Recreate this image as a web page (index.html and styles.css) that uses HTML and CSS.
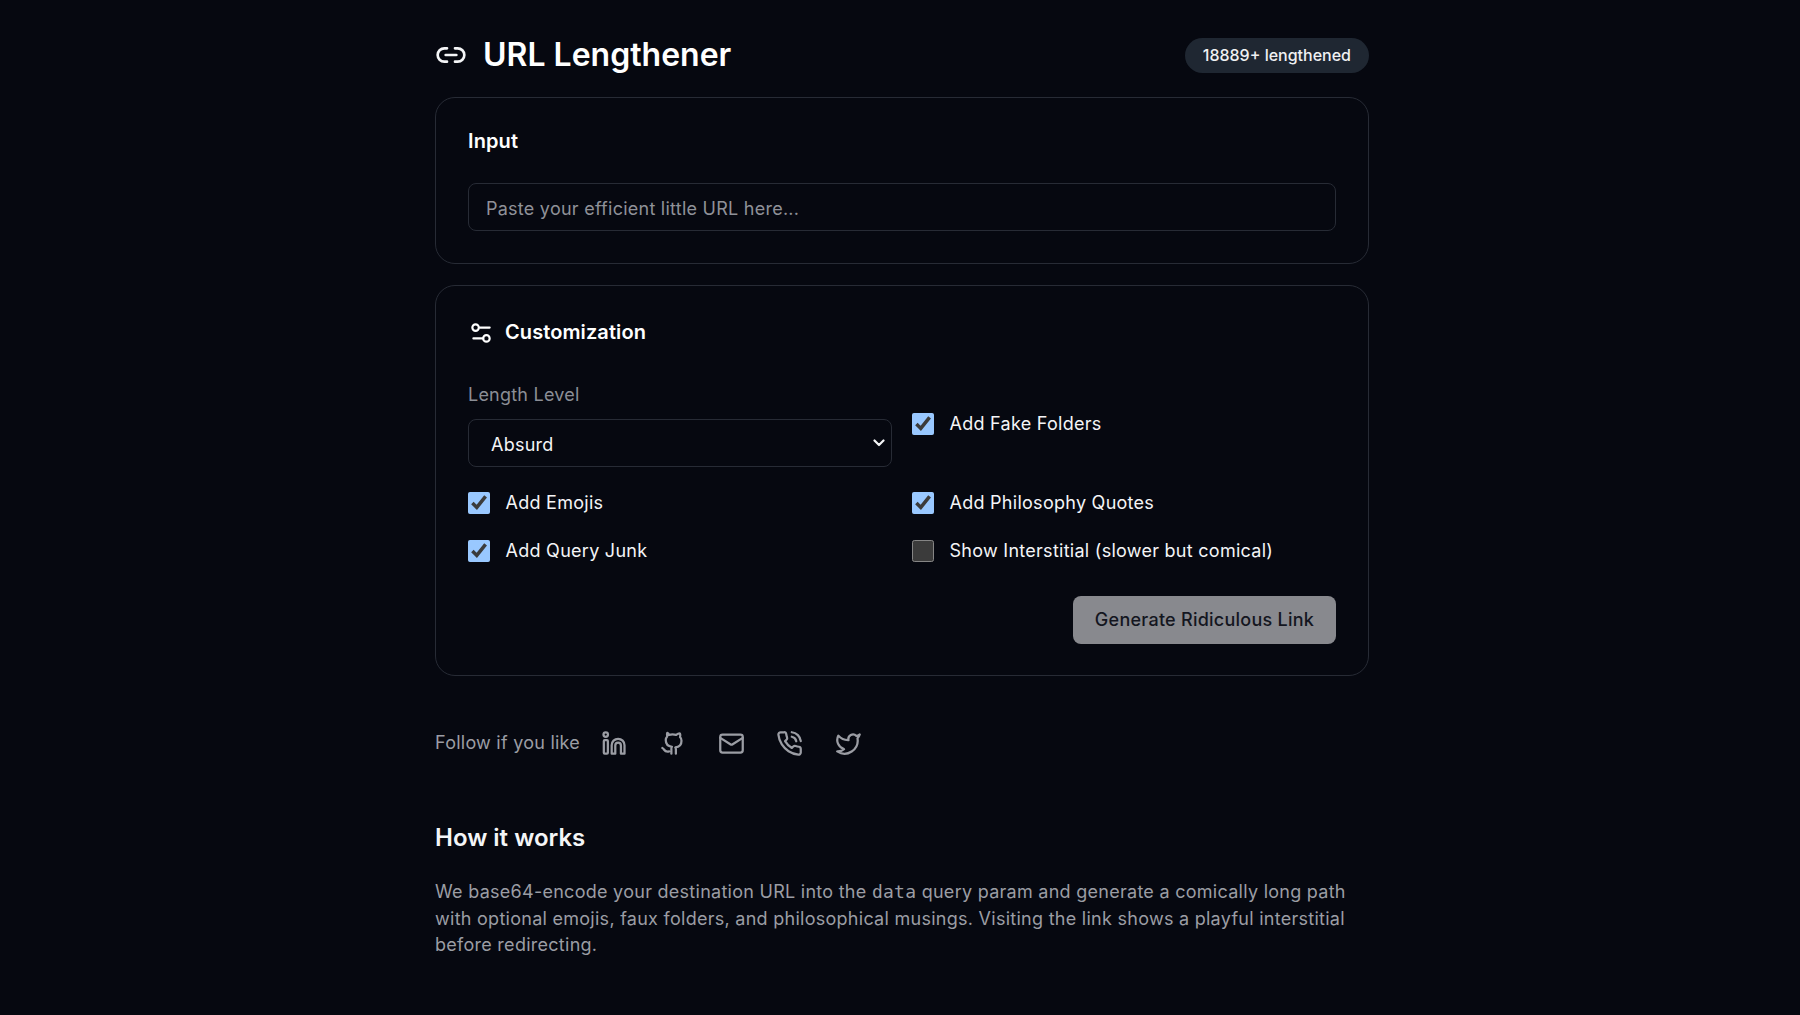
FILE: index.html
```html
<!DOCTYPE html>
<html lang="en">
<head>
<meta charset="utf-8">
<title>URL Lengthener</title>
<link rel="stylesheet" href="styles.css">
</head>
<body>
<main class="page">
  <header class="top">
    <div class="brand">
      <svg class="ic ic-link" viewBox="0 0 24 24"><path d="M9 17H7A5 5 0 0 1 7 7h2"/><path d="M15 7h2a5 5 0 1 1 0 10h-2"/><line x1="8" y1="12" x2="16" y2="12"/></svg>
      <h1>URL Lengthener</h1>
    </div>
    <span class="badge">18889+ lengthened</span>
  </header>

  <section class="card card-input">
    <h2 class="card-title">Input</h2>
    <input class="url" type="text" placeholder="Paste your efficient little URL here...">
  </section>

  <section class="card card-custom">
    <h2 class="card-title with-icon">
      <svg class="ic ic-set" viewBox="0 0 24 24"><path d="M20 7h-9"/><path d="M14 17H5"/><circle cx="17" cy="17" r="3"/><circle cx="7" cy="7" r="3"/></svg>
      Customization
    </h2>
    <div class="options">
      <div class="field">
        <label class="field-label" for="lvl">Length Level</label>
        <div class="select-wrap">
          <select class="level" id="lvl"><option>Absurd</option></select>
          <svg class="chev" viewBox="0 0 12 8"><path d="M1.500 1.500 6 6l4.500-4.500"/></svg>
        </div>
      </div>
      <label class="opt"><input type="checkbox" checked><span>Add Fake Folders</span></label>
      <label class="opt"><input type="checkbox" checked><span>Add Emojis</span></label>
      <label class="opt"><input type="checkbox" checked><span>Add Philosophy Quotes</span></label>
      <label class="opt"><input type="checkbox" checked><span>Add Query Junk</span></label>
      <label class="opt"><input type="checkbox"><span>Show Interstitial (slower but comical)</span></label>
    </div>
    <div class="actions"><button class="go" type="button">Generate Ridiculous Link</button></div>
  </section>

  <nav class="follow">
    <span class="follow-text">Follow if you like</span>
    <a class="soc"><svg class="ic" viewBox="0 0 24 24"><circle cx="4.2" cy="4" r="2"/><rect x="2.500" y="9" width="3.600" height="12" rx=".8"/><path d="M9.500 21V13.500a5.700 5.700 0 0 1 11.400 0V21h-3.200v-7.300a2.500 2.500 0 0 0-5 0V21z"/></svg></a>
    <a class="soc"><svg class="ic" viewBox="0 0 24 24"><path d="M9 19c-4.300 1.400-4.300-2.500-6-3m12 5v-3.500c0-1 .1-1.400-.5-2 2.800-.3 5.500-1.400 5.500-6a4.600 4.600 0 0 0-1.300-3.200 4.200 4.200 0 0 0-.1-3.200s-1.100-.3-3.500 1.300a12.300 12.300 0 0 0-6.200 0C8.500 2.800 7.400 2.500 7.400 2.500a4.200 4.200 0 0 0-.1 3.200A4.600 4.600 0 0 0 6 8.900c0 4.600 2.700 5.700 5.500 6-.6.6-.6 1.200-.5 2V21"/></svg></a>
    <a class="soc"><svg class="ic" viewBox="0 0 24 24"><rect x="2" y="4" width="20" height="16" rx="2"/><path d="m22 7-8.970 5.700a1.940 1.940 0 0 1-2.060 0L2 7"/></svg></a>
    <a class="soc"><svg class="ic" viewBox="0 0 24 24"><path d="M22 16.920v3a2 2 0 0 1-2.180 2 19.790 19.790 0 0 1-8.630-3.070 19.500 19.500 0 0 1-6-6 19.790 19.790 0 0 1-3.070-8.670A2 2 0 0 1 4.110 2h3a2 2 0 0 1 2 1.720 12.840 12.840 0 0 0 .7 2.810 2 2 0 0 1-.45 2.110L8.090 9.910a16 16 0 0 0 6 6l1.270-1.270a2 2 0 0 1 2.110-.45 12.840 12.840 0 0 0 2.810.7A2 2 0 0 1 22 16.920z"/><path d="M14.050 2a9 9 0 0 1 8 7.940"/><path d="M14.050 6A5 5 0 0 1 18 10"/></svg></a>
    <a class="soc"><svg class="ic" viewBox="0 0 24 24"><path d="M22 4s-.7 2.100-2 3.400c1.600 10-9.400 17.300-18 11.600 2.200.1 4.400-.6 6-2C3 15.500.5 9.600 3 5c2.200 2.600 5.600 4.100 9 4-.9-4.200 4-6.600 7-3.800 1.100 0 3-1.200 3-1.200z"/></svg></a>
  </nav>

  <section class="how">
    <h3>How it works</h3>
    <p>We base64-encode your destination URL into the <code>data</code> query param and generate a comically long path with optional emojis, faux folders, and philosophical musings. Visiting the link shows a playful interstitial before redirecting.</p>
  </section>
</main>
</body>
</html>
```
FILE: styles.css
```css
* { box-sizing: border-box; }
html { color-scheme: dark; }
body {
  margin: 0;
  padding-left: 4px;
  background: #060810;
  color: #f4f5f7;
  font-family: Inter, "Noto Sans", sans-serif;
  font-optical-sizing: none;
  font-size: 18px;
  line-height: 26.6px;
}
.page { width: 934px; margin: 0 auto; padding: 32px 0 40px; }
.ic { fill: none; stroke: currentColor; stroke-width: 2; stroke-linecap: round; stroke-linejoin: round; display: block; flex: none; }

.top { display: flex; align-items: center; justify-content: space-between; height: 46px; margin-bottom: 19px; }
.brand { display: flex; align-items: center; gap: 16px; }
.ic-link { width: 32px; height: 32px; }
h1 { margin: 0; font-size: 32px; line-height: 44px; font-weight: 600; color: #fff; }
.badge { height: 35px; padding: 0 18px; border-radius: 18px; background: #1f2732; font-size: 16px; font-weight: 500; line-height: 35px; color: #f0f1f3; }

.card { border: 1px solid #272b35; border-radius: 20px; padding: 32px; margin-bottom: 21px; }
.card-input { height: 167px; }
.card-custom { height: 391px; }
.card-title { margin: 0 0 30px; font-size: 20px; line-height: 23px; font-weight: 600; letter-spacing: .1px; color: #fff; }
.with-icon { display: flex; align-items: center; gap: 11px; height: 29px; margin-bottom: 33px; }
.ic-set { width: 26px; height: 26px; }

.url { display: block; width: 100%; height: 48px; padding: 2px 17px 0; background: #060810; border: 1px solid #272b35; border-radius: 8px; font: 18px Inter, sans-serif; font-optical-sizing: none; letter-spacing: .25px; color: #fff; }
.url::placeholder { color: #8f9198; opacity: 1; }

.options { display: grid; grid-template-columns: 1fr 1fr; column-gap: 20px; row-gap: 24px; align-items: center; }
.field { display: flex; flex-direction: column; gap: 12px; }
.field-label { padding-top: 3px; font-size: 18px; line-height: 24px; letter-spacing: .22px; color: #8b8e96; }
.select-wrap { position: relative; }
.level { display: block; width: 100%; height: 48px; padding: 2px 22px 0; appearance: none; background: #060810; border: 1px solid #272b35; border-radius: 8px; font: 18px Inter, sans-serif; font-optical-sizing: none; letter-spacing: .25px; color: #f4f5f7; }
.chev { position: absolute; right: 7px; top: 20px; width: 12px; height: 8px; fill: none; stroke: #f4f5f7; stroke-width: 2.2; stroke-linecap: round; stroke-linejoin: round; pointer-events: none; }
.opt { display: flex; align-items: center; gap: 15.5px; line-height: 24px; font-size: 18px; letter-spacing: .27px; }
.opt input { width: 22px; height: 22px; margin: 0; }

.actions { display: flex; justify-content: flex-end; margin-top: 33px; }
.go { width: 263px; height: 48px; padding: 0 0 1px; border: 0; border-radius: 8px; background: #88898e; color: #14161f; font: 500 18px Inter, sans-serif; font-optical-sizing: none; letter-spacing: .25px; }

.follow { display: flex; align-items: center; margin-top: 47px; color: #9b9da4; height: 40px; letter-spacing: .24px; }
.follow-text { margin-right: 5px; }
.soc { display: flex; width: 58.5px; justify-content: center; }
.soc .ic { width: 27px; height: 27px; }

.how { margin-top: 59px; }
h3 { margin: 0 0 25px; font-size: 24px; line-height: 32px; font-weight: 600; color: #f4f5f7; }
.how p { margin: 0; color: #9b9da4; letter-spacing: .27px; }
code { font-family: "DejaVu Sans Mono", monospace; font-size: 18px; }
```
